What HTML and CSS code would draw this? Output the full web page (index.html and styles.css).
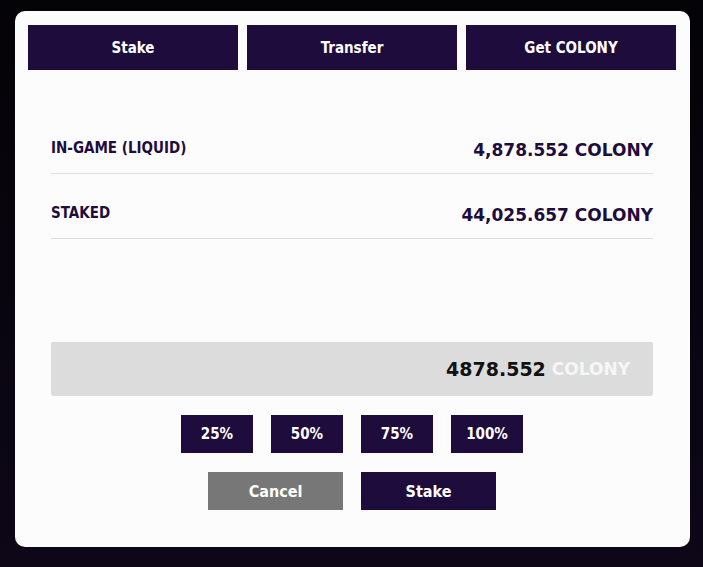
FILE: index.html
```html
<!DOCTYPE html>
<html lang="en">
<head>
  <meta charset="UTF-8" />
  <meta name="viewport" content="width=device-width, initial-scale=1.0"/>
  <title>Stake COLONY</title>
  <link rel="stylesheet" href="styles.css">
</head>
<body>
  <div class="modal">
    <nav class="tabs">
      <a href="#" class="tab">Stake</a>
      <a href="#" class="tab">Transfer</a>
      <a href="#" class="tab">Get COLONY</a>
    </nav>

    <div class="balances">
      <div class="balance-row">
        <span class="balance-label">IN-GAME (LIQUID)</span>
        <span class="balance-value">4,878.552 COLONY</span>
      </div>
      <div class="balance-row">
        <span class="balance-label">STAKED</span>
        <span class="balance-value">44,025.657 COLONY</span>
      </div>
    </div>

    <div class="amount-box">
      <span class="amount">4878.552</span>
      <span class="amount-unit">COLONY</span>
    </div>

    <div class="percent-buttons">
      <button class="btn small">25%</button>
      <button class="btn small">50%</button>
      <button class="btn small">75%</button>
      <button class="btn small">100%</button>
    </div>

    <div class="actions">
      <button class="btn wide cancel">Cancel</button>
      <button class="btn wide">Stake</button>
    </div>
  </div>
</body>
</html>
```

FILE: styles.css
```css
:root {
  --purple: #1e0c3c;
  --card: #fdfcfd;
  --line: #dedbe2;
}

* {
  margin: 0;
  padding: 0;
  box-sizing: border-box;
}

body {
  background: linear-gradient(to bottom, #040306, #0d0718);
  min-height: 100vh;
  padding: 11px 13px 0 15px;
  font-family: 'DejaVu Sans Condensed', 'DejaVu Sans', sans-serif;
}

.modal {
  width: 675px;
  height: 536px;
  background: var(--card);
  border-radius: 10px;
  padding: 14px 14px 37px 13px;
}

.tabs {
  display: grid;
  grid-template-columns: repeat(3, 1fr);
  gap: 9px;
}

.tab {
  height: 45px;
  display: flex;
  align-items: center;
  justify-content: center;
  background: var(--purple);
  color: #fff;
  text-decoration: none;
  font-weight: bold;
  font-size: 15px;
}

.balances {
  margin: 39px 23px 0;
}

.balance-row {
  display: flex;
  justify-content: space-between;
  align-items: center;
  height: 65px;
  padding-top: 13px;
  line-height: 20px;
  border-bottom: 1px solid var(--line);
  color: var(--purple);
  font-weight: bold;
}

.balance-label {
  font-size: 15px;
}

.balance-value {
  font-family: 'DejaVu Sans', sans-serif;
  font-size: 17px;
  margin-top: 4px;
}

.amount-box {
  margin: 103px 23px 0;
  height: 54px;
  background: #dcdcdc;
  border-radius: 2px;
  display: flex;
  align-items: center;
  justify-content: flex-end;
  gap: 6px;
  padding-right: 23px;
  font-family: 'DejaVu Sans', sans-serif;
  font-weight: bold;
}

.amount {
  font-size: 19px;
  color: #111;
}

.amount-unit {
  font-size: 17px;
  color: #f6f6f6;
}

.percent-buttons, .actions {
  display: flex;
  justify-content: center;
  gap: 18px;
  margin-top: 19px;
}

.btn {
  height: 38px;
  border: none;
  background: var(--purple);
  color: #fff;
  font-family: inherit;
  font-weight: bold;
  cursor: pointer;
}

.btn.small {
  width: 72px;
  font-size: 15px;
}

.btn.wide {
  width: 135px;
  font-size: 16px;
}

.btn.cancel {
  background: #777;
}
```
